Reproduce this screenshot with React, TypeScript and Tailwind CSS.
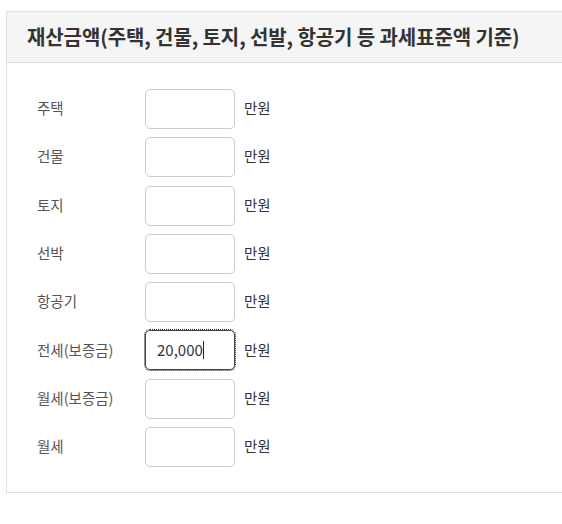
const rows = [
  { label: "주택", value: "" },
  { label: "건물", value: "" },
  { label: "토지", value: "" },
  { label: "선박", value: "" },
  { label: "항공기", value: "" },
  { label: "전세(보증금)", value: "20,000", focused: true },
  { label: "월세(보증금)", value: "" },
  { label: "월세", value: "" },
];

export default function App() {
  return (
    <div className="w-[562px] h-[524px] bg-white pt-[11px] pl-[6px] overflow-hidden font-['Noto_Sans_CJK_KR','Noto_Sans',sans-serif]">
      <div className="w-[570px] border border-[#e1e1e1]">
        {/* header */}
        <div className="h-[51px] bg-[#f5f5f5] border-b border-[#e1e1e1] flex items-center pl-[20px]">
          <h2 className="text-[20px] font-bold text-[#333] tracking-[-0.1px]">
            재산금액(주택, 건물, 토지, 선발, 항공기 등 과세표준액 기준)
          </h2>
        </div>

        {/* fields */}
        <div className="flex flex-col gap-[8.3px] pt-[26px] pb-[25px] pl-[30px]">
          {rows.map((r) => (
            <div key={r.label} className="flex items-center h-[40px]">
              <span className="w-[108px] text-[14.5px] text-[#555] -mt-[2px]">{r.label}</span>
              <div
                className={
                  r.focused
                    ? "w-[90px] h-[40px] rounded-[5px] border border-[#444] outline-1 outline-dotted outline-[#222] flex items-center px-[11px] text-[15px] text-[#333]"
                    : "w-[90px] h-[40px] rounded-[5px] border border-[#ccc]"
                }
              >
                {r.focused && (
                  <>
                    <span>{r.value}</span>
                    <span className="w-px h-[18px] bg-[#222]" />
                  </>
                )}
              </div>
              <span className="ml-[9px] text-[14.5px] text-[#333] -mt-[2px]">만원</span>
            </div>
          ))}
        </div>
      </div>
    </div>
  );
}
